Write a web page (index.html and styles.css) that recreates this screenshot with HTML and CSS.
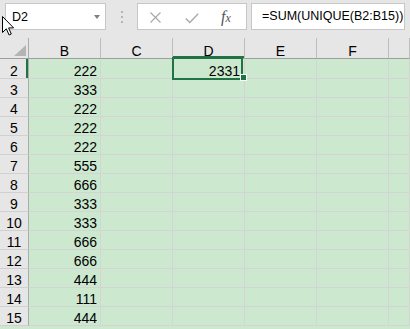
FILE: index.html
```html
<!DOCTYPE html>
<html lang="en">
<head>
    <meta charset="UTF-8">
    <meta name="viewport" content="width=device-width, initial-scale=1.0">
    <title>Sheet1</title>
    <link rel="stylesheet" href="styles.css">
</head>
<body>
<div class="excel">

    <!-- Formula bar -->
    <div class="formula-bar">
        <div class="name-box"><span>D2</span><span class="caret"></span></div>
        <div class="grip"><i></i><i></i><i></i></div>
        <div class="fx-tools">
            <svg class="cancel" width="11" height="11" viewBox="0 0 11 11"><path d="M0.5 0.5L10.5 10.5M10.5 0.5L0.5 10.5" stroke="#a9a9a9" stroke-width="1.2" fill="none"/></svg>
            <svg class="enter" width="14" height="11" viewBox="0 0 14 11"><path d="M0.8 5.6L4.8 9.6L13.2 0.8" stroke="#a9a9a9" stroke-width="1.4" fill="none"/></svg>
            <span class="fx">f<span>x</span></span>
        </div>
        <div class="formula">=SUM(UNIQUE(B2:B15))</div>
    </div>

    <!-- Grid -->
    <div class="sheet">
        <div class="row head">
            <div class="corner"><i></i></div>
            <div class="col">B</div>
            <div class="col">C</div>
            <div class="col on">D</div>
            <div class="col">E</div>
            <div class="col">F</div>
            <div class="col last"></div>
        </div>
        <div class="row first">
            <div class="rh on">2</div><div class="c">222</div><div class="c"></div><div class="c sel">2331</div><div class="c"></div><div class="c"></div><div class="c last"></div>
        </div>
        <div class="row">
            <div class="rh">3</div><div class="c">333</div><div class="c"></div><div class="c"></div><div class="c"></div><div class="c"></div><div class="c last"></div>
        </div>
        <div class="row">
            <div class="rh">4</div><div class="c">222</div><div class="c"></div><div class="c"></div><div class="c"></div><div class="c"></div><div class="c last"></div>
        </div>
        <div class="row">
            <div class="rh">5</div><div class="c">222</div><div class="c"></div><div class="c"></div><div class="c"></div><div class="c"></div><div class="c last"></div>
        </div>
        <div class="row">
            <div class="rh">6</div><div class="c">222</div><div class="c"></div><div class="c"></div><div class="c"></div><div class="c"></div><div class="c last"></div>
        </div>
        <div class="row">
            <div class="rh">7</div><div class="c">555</div><div class="c"></div><div class="c"></div><div class="c"></div><div class="c"></div><div class="c last"></div>
        </div>
        <div class="row">
            <div class="rh">8</div><div class="c">666</div><div class="c"></div><div class="c"></div><div class="c"></div><div class="c"></div><div class="c last"></div>
        </div>
        <div class="row">
            <div class="rh">9</div><div class="c">333</div><div class="c"></div><div class="c"></div><div class="c"></div><div class="c"></div><div class="c last"></div>
        </div>
        <div class="row">
            <div class="rh">10</div><div class="c">333</div><div class="c"></div><div class="c"></div><div class="c"></div><div class="c"></div><div class="c last"></div>
        </div>
        <div class="row">
            <div class="rh">11</div><div class="c">666</div><div class="c"></div><div class="c"></div><div class="c"></div><div class="c"></div><div class="c last"></div>
        </div>
        <div class="row">
            <div class="rh">12</div><div class="c">666</div><div class="c"></div><div class="c"></div><div class="c"></div><div class="c"></div><div class="c last"></div>
        </div>
        <div class="row">
            <div class="rh">13</div><div class="c">444</div><div class="c"></div><div class="c"></div><div class="c"></div><div class="c"></div><div class="c last"></div>
        </div>
        <div class="row">
            <div class="rh">14</div><div class="c">111</div><div class="c"></div><div class="c"></div><div class="c"></div><div class="c"></div><div class="c last"></div>
        </div>
        <div class="row">
            <div class="rh">15</div><div class="c">444</div><div class="c"></div><div class="c"></div><div class="c"></div><div class="c"></div><div class="c last"></div>
        </div>
    </div>

    <!-- Mouse pointer -->
    <svg class="cursor" width="13" height="20" viewBox="0 0 13 20">
        <path d="M0.5 0.5L0.5 16.5L4.3 12.8L7.1 19L9.3 18L6.6 11.9L11.6 11.9Z" fill="#fff" stroke="#000" stroke-width="1" stroke-linejoin="miter"/>
    </svg>
</div>
</body>
</html>
```

FILE: styles.css
```css
/* General */
body {
    margin: 0;
    font-family: "Liberation Sans", Arial, sans-serif;
    color: #000;
    background-color: #cce8cf;
}
.excel {
    position: relative;
    width: 410px;
    height: 329px;
    overflow: hidden;
    background-color: #cce8cf; /* eye-care green */
}

/* Formula bar */
.formula-bar {
    display: flex;
    align-items: flex-start;
    height: 38px;
    padding: 3px 5px 0;
    box-sizing: border-box;
    background-color: #e6e6e6;
}
.name-box, .fx-tools, .formula {
    height: 27px;
    box-sizing: border-box;
    background-color: #fff;
    border: 1px solid #c6c6c6;
}
.name-box {
    display: flex;
    align-items: center;
    width: 101px;
    padding-left: 6px;
    font-size: 12.5px;
}
.name-box .caret {
    margin-left: auto;
    margin-right: 5px;
    border-left: 3.5px solid transparent;
    border-right: 3.5px solid transparent;
    border-top: 4px solid #808080;
}
.grip {
    display: flex;
    flex-direction: column;
    align-items: center;
    gap: 3px;
    width: 31px;
    padding-top: 8px;
}
.grip i {
    width: 2px;
    height: 2px;
    background-color: #b4b4b4;
}
.fx-tools {
    display: flex;
    align-items: flex-start;
    width: 110px;
    padding-left: 12px;
}
.fx-tools .cancel {
    margin-top: 8px;
}
.fx-tools .enter {
    margin-top: 9px;
    margin-left: 24px;
}
.fx-tools .fx {
    margin-left: 22px;
    margin-top: 4px;
    font-family: "Liberation Serif", "Times New Roman", serif;
    font-style: italic;
    font-size: 16px;
    color: #555;
}
.fx-tools .fx span {
    font-size: 12px;
}
.formula {
    flex: 1;
    margin-left: 4px;
    padding-left: 10px;
    font-size: 12.5px;
    line-height: 25px;
    white-space: nowrap;
}

/* Grid */
.row {
    display: flex;
    height: 19px;
    font-size: 14px;
}
.row.head {
    height: 21px;
    background-color: #e6e6e6;
}
.row.first {
    height: 20px;
}
.corner, .col, .rh, .c {
    display: flex;
    align-items: flex-end;
    box-sizing: border-box;
    line-height: 14px;
}
.corner {
    justify-content: flex-end;
    width: 29px;
    padding: 0 2px 2px 0;
    border-right: 1px solid #ababab;
    border-bottom: 1px solid #9e9e9e;
}
.corner i {
    width: 12px;
    height: 11px;
    background-color: #b4b4b4;
    clip-path: polygon(100% 0, 100% 100%, 0 100%);
}
.col {
    justify-content: center;
    width: 72px;
    border-right: 1px solid #bdbdbd;
    border-bottom: 1px solid #9e9e9e;
}
.col.on {
    box-shadow: inset 0 -2px #217346;
}
.rh {
    justify-content: center;
    width: 29px;
    background-color: #e6e6e6;
    border-right: 1px solid #ababab;
    border-bottom: 1px solid #d0d0d0;
}
.rh.on {
    box-shadow: inset -2px 0 #217346;
}
.c {
    justify-content: flex-end;
    width: 72px;
    padding-right: 3px;
    border-right: 1px solid #d4d4d4;
    border-bottom: 1px solid #d4d4d4;
}
.col.last, .c.last {
    flex: 1;
}

/* Active cell */
.c.sel {
    position: relative;
    padding-right: 4px;
}
.c.sel::before {
    content: "";
    position: absolute;
    top: -2px;
    left: -1px;
    right: 1px;
    bottom: -2px;
    border: 2px solid #217346;
}
.c.sel::after {
    content: "";
    position: absolute;
    right: -3px;
    bottom: -3px;
    width: 7px;
    height: 7px;
    box-sizing: border-box;
    background-color: #217346;
    border: 1px solid #fff;
}

/* Pointer */
.cursor {
    position: absolute;
    left: 2px;
    top: 16px;
}
```
